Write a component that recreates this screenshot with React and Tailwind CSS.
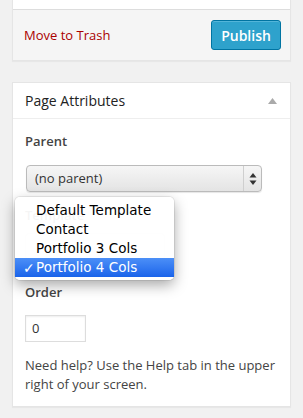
const OPTIONS = ["Default Template", "Contact", "Portfolio 3 Cols", "Portfolio 4 Cols"];

function SelectArrows() {
  return (
    <svg width="8" height="12" viewBox="0 0 8 12" className="block">
      <path d="M4 0 L7.5 4.5 L0.5 4.5 Z" fill="#333" />
      <path d="M4 12 L7.5 7.5 L0.5 7.5 Z" fill="#333" />
    </svg>
  );
}

function TemplateMenu() {
  return (
    <div
      className="absolute left-[2px] top-[65px] w-[159px] bg-[rgba(255,255,255,0.95)] rounded-[5px] pt-[4px] pb-[3px] shadow-[0_5px_14px_rgba(0,0,0,0.35),0_0_0_1px_rgba(0,0,0,0.07)]"
      style={{ fontFamily: '"DejaVu Sans", sans-serif' }}
    >
      {OPTIONS.map((o, i) => {
        const sel = i === OPTIONS.length - 1;
        return (
          <div
            key={o}
            className={`h-[19px] flex items-center text-[13.5px] leading-none ${
              sel ? "bg-gradient-to-b from-[#4c8ff7] to-[#1a63ea] text-white" : "text-black"
            }`}
          >
            <span className="w-[21px] pl-[8px] text-[14px]">{sel ? "✓" : ""}</span>
            <span>{o}</span>
          </div>
        );
      })}
    </div>
  );
}

export default function App() {
  return (
    <div
      className="w-[303px] h-[418px] bg-[#f1f1f1] overflow-hidden text-[#444]"
      style={{ fontFamily: '"Open Sans", sans-serif' }}
    >
      {/* publish box (bottom part) */}
      <div className="mx-[12px] border-x border-b border-[#e5e5e5] shadow-[0_1px_1px_rgba(0,0,0,0.04)]">
        <div className="h-[10px] bg-white border-b border-[#dddddd]" />
        <div className="h-[50px] bg-[#f5f5f5] flex items-center justify-between pl-[11px] pr-[9px]">
          <a className="text-[13px] text-[#a00] leading-none">Move to Trash</a>
          <button className="w-[70px] h-[30px] rounded-[3px] bg-[#2ea2cc] border border-[#0074a2] text-white text-[14px] font-semibold shadow-[inset_0_1px_0_rgba(120,200,230,0.5)]">
            Publish
          </button>
        </div>
      </div>

      {/* page attributes */}
      <div className="mx-[12px] mt-[21px] bg-white border border-[#e5e5e5] shadow-[0_1px_1px_rgba(0,0,0,0.04)]">
        <div className="h-[36px] border-b border-[#eeeeee] flex items-center justify-between pl-[12px] pr-[13px]">
          <h3 className="text-[14px] text-[#222] leading-none">Page Attributes</h3>
          <svg width="9" height="6" viewBox="0 0 9 6">
            <path d="M4.5 0 L9 6 L0 6 Z" fill="#aaa" />
          </svg>
        </div>

        <div className="relative pl-[12px] pr-[10px] pb-[12px] text-[13px]">
          <p className="mt-[13px] h-[18px] leading-[18px] font-semibold">Parent</p>
          <div className="mt-[15px] h-[27px] w-[236px] ml-[1px] flex rounded-[4px] border border-[#bbb] bg-gradient-to-b from-[#f6f6f6] to-[#e4e4e4] shadow-[0_1px_1px_rgba(0,0,0,0.1)]">
            <span className="flex-1 pl-[8px] flex items-center text-[#333] text-[13px]">(no parent)</span>
            <span className="w-[18px] border-l border-[#cfcfcf] flex items-center justify-center">
              <SelectArrows />
            </span>
          </div>

          <p className="mt-[14px] h-[18px] leading-[18px] font-semibold">Template</p>
          <div className="mt-[9px] h-[27px] w-[140px] rounded-[4px] border border-[#ddd] bg-[#f4f4f4]" />

          <p className="mt-[23px] h-[18px] leading-[18px] font-semibold">Order</p>
          <div className="mt-[14px] w-[61px] h-[27px] border border-[#ddd] flex items-center pl-[6px] text-[#333] shadow-[inset_0_1px_2px_rgba(0,0,0,0.07)]">
            0
          </div>

          <p className="mt-[14px] leading-[19px] text-[#444]">
            Need help? Use the Help tab in the upper right of your screen.
          </p>

          <TemplateMenu />
        </div>
      </div>
    </div>
  );
}
